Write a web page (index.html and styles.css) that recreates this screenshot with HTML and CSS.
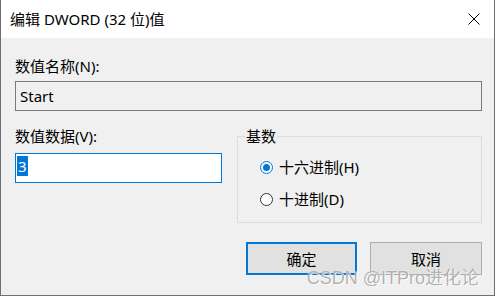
FILE: index.html
```html
<!DOCTYPE html>
<html lang="zh-CN">
<head>
  <meta charset="UTF-8" />
  <title>编辑 DWORD (32 位)值</title>
  <link rel="stylesheet" href="styles.css">
</head>
<body>
  <div class="dialog">
    <div class="titlebar">
      <span class="title">编辑 DWORD (32 位)值</span>
      <span class="close">
        <svg width="12" height="12" viewBox="0 0 12 12">
          <path d="M0.5 0.5 L11.5 11.5 M11.5 0.5 L0.5 11.5" stroke="#000" stroke-width="1" fill="none" />
        </svg>
      </span>
    </div>

    <div class="content">
      <div class="label">数值名称(N):</div>
      <div class="textbox readonly">Start</div>

      <div class="middle">
        <div class="data-col">
          <div class="label">数值数据(V):</div>
          <div class="textbox focused"><span class="sel">3</span></div>
        </div>

        <fieldset class="group">
          <legend>基数</legend>
          <label class="radio"><span class="dot checked"></span>十六进制(H)</label>
          <label class="radio"><span class="dot"></span>十进制(D)</label>
        </fieldset>
      </div>

      <div class="buttons">
        <button class="btn default">确定</button>
        <button class="btn">取消</button>
      </div>
    </div>

    <div class="watermark">CSDN @ITPro进化论</div>
  </div>
</body>
</html>
```

FILE: styles.css
```css
* {
  box-sizing: border-box;
}

body {
  margin: 0;
  padding: 0;
  font-family: "Noto Sans", "Noto Sans CJK SC", sans-serif;
  font-size: 15px;
  color: #000;
  background-color: #fff;
}

.dialog {
  position: relative;
  width: 495px;
  height: 296px;
  background-color: #f0f0f0;
  border: 1px solid #6f6f6f;
  border-top: none;
  display: flex;
  flex-direction: column;
}

.titlebar {
  height: 38px;
  background-color: #fff;
  display: flex;
  align-items: center;
  justify-content: space-between;
  padding: 0 14px 0 9px;
}

.title {
  line-height: 20px;
  margin-top: -1px;
}

.close {
  display: flex;
  width: 12px;
  height: 12px;
  margin-top: -1px;
}

.content {
  padding: 18px 12px 0 14px;
}

.label {
  line-height: 20px;
}

.textbox {
  height: 30px;
  border: 1px solid #7a7a7a;
  padding: 0 4px;
  line-height: 28px;
  margin-top: 5px;
}

.textbox.readonly {
  background-color: #f0f0f0;
}

.textbox.focused {
  background-color: #fff;
  border-color: #0078d7;
  margin-top: 7px;
  padding: 2px 0 0 1px;
  line-height: 20px;
}

.sel {
  display: inline-block;
  background-color: #0078d7;
  color: #fff;
  padding: 0 1px;
  line-height: 20px;
}

.middle {
  display: grid;
  grid-template-columns: 207px 1fr;
  column-gap: 15px;
  margin-top: 15px;
}

.group {
  margin: 0;
  border: 1px solid #dcdcdc;
  padding: 10px 0 0 0;
  height: 97px;
}

.group legend {
  padding: 0 1px;
  margin-left: 7px;
  line-height: 20px;
}

.radio {
  display: flex;
  align-items: center;
  gap: 6px;
  height: 22px;
  line-height: 20px;
  margin-left: 22px;
}

.radio + .radio {
  margin-top: 10px;
}

.dot {
  flex: none;
  width: 13px;
  height: 13px;
  border-radius: 50%;
  border: 1px solid #333;
  background-color: #fff;
  position: relative;
}

.dot.checked {
  border-color: #0078d7;
}

.dot.checked::after {
  content: "";
  position: absolute;
  left: 2px;
  top: 2px;
  width: 7px;
  height: 7px;
  border-radius: 50%;
  background-color: #0078d7;
}

.buttons {
  display: flex;
  justify-content: flex-end;
  gap: 13px;
  margin-top: 19px;
}

.btn {
  width: 112px;
  height: 33px;
  background-color: #e1e1e1;
  border: 1px solid #adadad;
  font-family: "Noto Sans", "Noto Sans CJK SC", sans-serif;
  font-size: 15px;
  color: #000;
  padding: 0;
}

.btn.default {
  width: 111px;
  border: 2px solid #0078d7;
}

.watermark {
  position: absolute;
  right: 15px;
  bottom: 6px;
  font-family: "Liberation Sans", "Noto Sans CJK SC", sans-serif;
  font-size: 18px;
  color: rgba(110, 110, 110, 0.55);
  text-shadow: 0 0 1px #fff, 1px 1px 0 rgba(255, 255, 255, 0.8);
  pointer-events: none;
}
```
